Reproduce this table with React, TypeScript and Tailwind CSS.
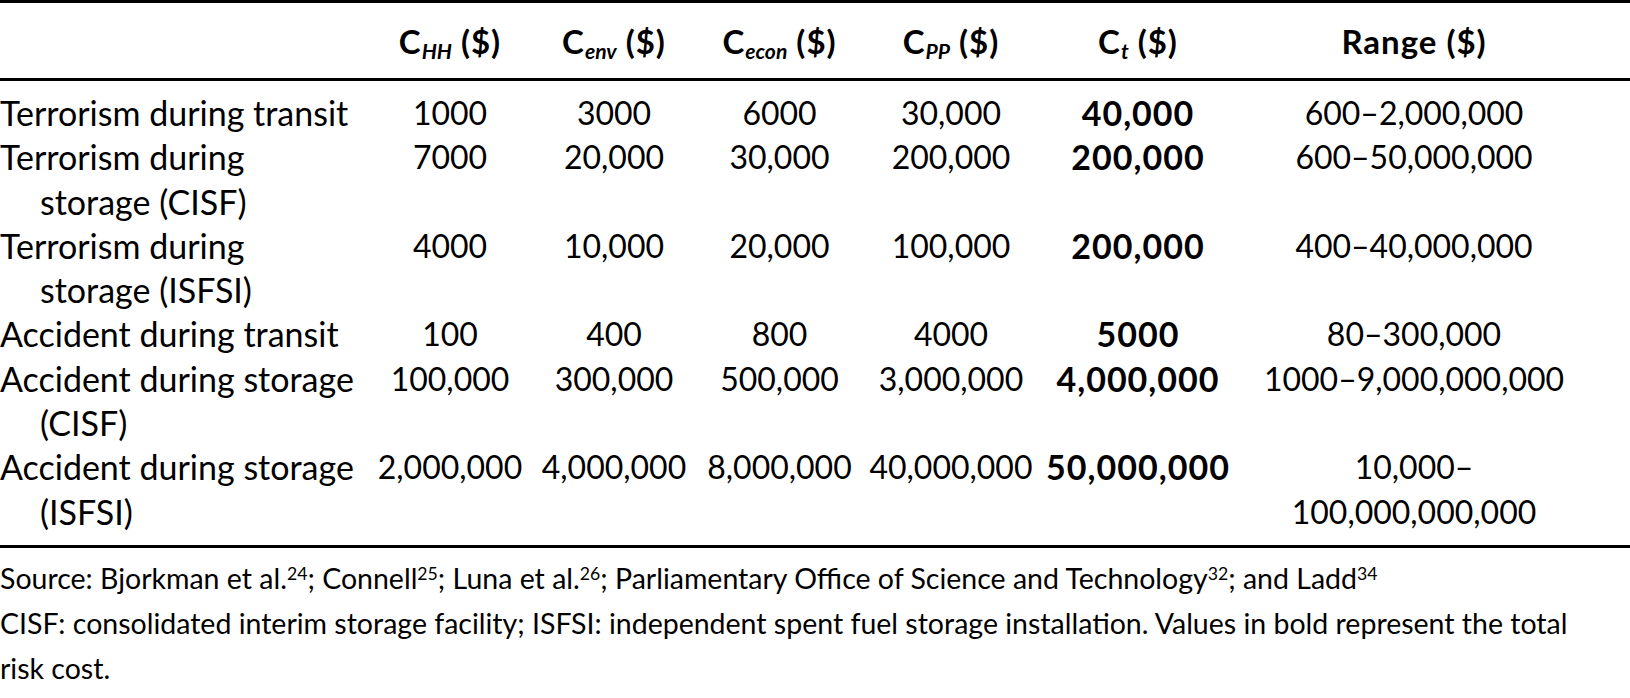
import React from "react";

type Row = {
  label: string[];
  vals: string[];
  total: string;
  range: string[];
};

const rows: Row[] = [
  { label: ["Terrorism during transit"], vals: ["1000", "3000", "6000", "30,000"], total: "40,000", range: ["600–2,000,000"] },
  { label: ["Terrorism during", "storage (CISF)"], vals: ["7000", "20,000", "30,000", "200,000"], total: "200,000", range: ["600–50,000,000"] },
  { label: ["Terrorism during", "storage (ISFSI)"], vals: ["4000", "10,000", "20,000", "100,000"], total: "200,000", range: ["400–40,000,000"] },
  { label: ["Accident during transit"], vals: ["100", "400", "800", "4000"], total: "5000", range: ["80–300,000"] },
  { label: ["Accident during storage", "(CISF)"], vals: ["100,000", "300,000", "500,000", "3,000,000"], total: "4,000,000", range: ["1000–9,000,000,000"] },
  { label: ["Accident during storage", "(ISFSI)"], vals: ["2,000,000", "4,000,000", "8,000,000", "40,000,000"], total: "50,000,000", range: ["10,000–", "100,000,000,000"] },
];

function Head({ sub }: { sub?: string }) {
  return (
    <span>
      C<sub className="italic text-[0.64em] tracking-normal">{sub}</sub>&nbsp;($)
    </span>
  );
}

const App: React.FC = () => {
  return (
    <div className="w-[1630px] h-[698px] overflow-hidden bg-white text-black font-['Lato',sans-serif]">
      <table className="w-[1630px] table-fixed border-collapse">
        <colgroup>
          <col className="w-[365px]" />
          <col className="w-[170px]" />
          <col className="w-[158px]" />
          <col className="w-[173px]" />
          <col className="w-[170px]" />
          <col className="w-[204px]" />
          <col className="w-[390px]" />
        </colgroup>
        <thead>
          <tr className="border-y-[3px] border-black h-[78px] text-[33px] font-bold tracking-[0.03em]">
            <th />
            <th className="text-center pt-[2px]"><Head sub="HH" /></th>
            <th className="text-center pt-[2px]"><Head sub="env" /></th>
            <th className="text-center pt-[2px]"><Head sub="econ" /></th>
            <th className="text-center pt-[2px]"><Head sub="PP" /></th>
            <th className="text-center pt-[2px]"><Head sub="t" /></th>
            <th className="text-center pt-[2px] pr-[42px]">Range ($)</th>
          </tr>
        </thead>
        <tbody className="text-[32px] leading-[44.3px] border-b-[3px] border-black">
          {rows.map((r, i) => {
            const pad = i === 0 ? "pt-[10px] align-top" : i === rows.length - 1 ? "pb-[11px] align-top" : "align-top";
            return (
              <tr key={i}>
                <td className={`${pad} pl-[40px] text-[34px] whitespace-nowrap`}>
                  {r.label.map((l, j) => (
                    <div key={j} className={j === 0 ? "-ml-[40px]" : ""}>{l}</div>
                  ))}
                </td>
                {r.vals.map((v, j) => (
                  <td key={j} className={`${pad} text-center whitespace-nowrap`}>{v}</td>
                ))}
                <td className={`${pad} text-center font-bold text-[34px] tracking-[0.03em] whitespace-nowrap`}>{r.total}</td>
                <td className={`${pad} text-center pr-[42px] whitespace-nowrap`}>
                  {r.range.map((l, j) => (
                    <div key={j}>{l}</div>
                  ))}
                </td>
              </tr>
            );
          })}
        </tbody>
      </table>
      <div className="pt-[8px] text-[28.5px] leading-[45px] whitespace-nowrap">
        <div>
          Source: Bjorkman et al.<sup className="text-[0.62em]">24</sup>; Connell<sup className="text-[0.62em]">25</sup>; Luna et al.
          <sup className="text-[0.62em]">26</sup>; Parliamentary Office of Science and Technology<sup className="text-[0.62em]">32</sup>; and Ladd
          <sup className="text-[0.62em]">34</sup>
        </div>
        <div>
          CISF: consolidated interim storage facility; ISFSI: independent spent fuel storage installation. Values in bold represent the total
        </div>
        <div>risk cost.</div>
      </div>
    </div>
  );
};

export default App;
